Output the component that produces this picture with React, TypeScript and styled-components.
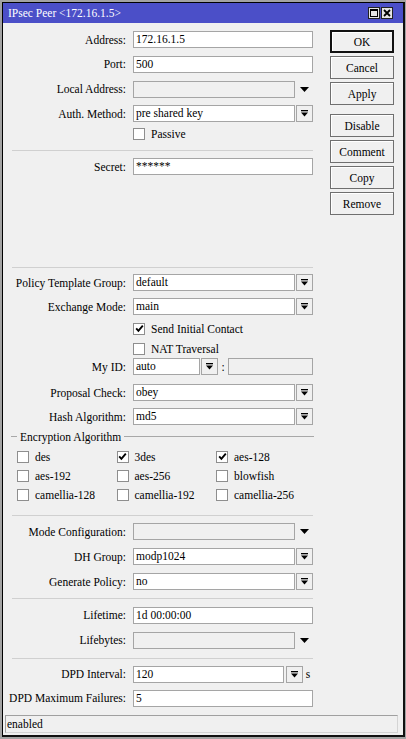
import { createGlobalStyle, styled } from "styled-components"

const GlobalStyle = createGlobalStyle`
  html, body {
    margin: 0;
    padding: 0;
    background: #a3a3a3;
  }
  body {
    font-family: "Liberation Serif", "Times New Roman", serif;
    font-size: 11.5px;
    color: #000;
  }
`

const Window = styled.div`
  margin: 2px 0 0 2px;
  width: 403px;
  height: 735px;
  box-sizing: border-box;
  border-left: 1px solid #000;
  border-top: 1px solid #000;
  border-right: 2px solid #111;
  border-bottom: 2px solid #111;
  background: #f0f0f0;
  display: flex;
  flex-direction: column;
`

const TitleBar = styled.div`
  height: 20px;
  background: #4b4fc8;
  color: #fff;
  display: flex;
  align-items: center;
  padding-left: 5px;
  padding-right: 10px;
`

const TitleText = styled.span`
  flex: 1;
  white-space: nowrap;
`

const TitleButtons = styled.div`
  display: flex;
  gap: 1px;
`

const TitleButton = styled.div`
  width: 12px;
  height: 12px;
  box-sizing: border-box;
  background: #e4e4e4;
  border: 1px solid #222;
  display: flex;
  align-items: center;
  justify-content: center;
`

const Main = styled.div`
  display: flex;
`

const Form = styled.div`
  width: 320px;
  display: flex;
  flex-direction: column;
`

const Row = styled.div<{ $mt: number }>`
  margin-top: ${p => p.$mt}px;
  display: grid;
  grid-template-columns: 123px 180px;
  column-gap: 7px;
  align-items: center;
  height: 17px;
`

const CheckRow = styled(Row)`
  height: 14px;
`

const Label = styled.label`
  text-align: right;
  white-space: nowrap;
`

const Field = styled.div`
  display: flex;
  align-items: center;
  height: 17px;
`

const TextBox = styled.div<{ $disabled?: boolean; $width?: number }>`
  ${p => (p.$width ? `width: ${p.$width}px;` : "flex: 1;")}
  height: 17px;
  box-sizing: border-box;
  border: 1px solid #a5a5a5;
  background: ${p => (p.$disabled ? "#f0f0f0" : "#fff")};
  padding-left: 2px;
  line-height: 15px;
  white-space: nowrap;
  overflow: hidden;
`

const DropButton = styled.div<{ $gap?: number }>`
  width: 17px;
  height: 17px;
  box-sizing: border-box;
  margin-left: ${p => p.$gap ?? 1}px;
  border: 1px solid #a5a5a5;
  background: #f0f0f0;
  display: flex;
  align-items: center;
  justify-content: center;
`

const ArrowSlot = styled.div`
  width: 17px;
  margin-left: 1px;
  display: flex;
  align-items: center;
  justify-content: center;
`

const Suffix = styled.span<{ $width: number }>`
  width: ${p => p.$width}px;
  text-align: center;
`

const Check = styled.div`
  display: flex;
  align-items: center;
  gap: 6px;
  white-space: nowrap;
`

const Box = styled.div`
  width: 12px;
  height: 12px;
  box-sizing: border-box;
  border: 1px solid #8e8e8e;
  background: #fff;
  display: flex;
  align-items: center;
  justify-content: center;
`

const Separator = styled.div<{ $mt: number }>`
  margin-top: ${p => p.$mt}px;
  margin-left: 9px;
  width: 301px;
  height: 1px;
  background: #d0d0d0;
`

const Legend = styled.div<{ $mt: number }>`
  margin-top: ${p => p.$mt}px;
  height: 14px;
  width: 303px;
  margin-left: 8px;
  display: flex;
  align-items: center;
`

const LegendLine = styled.div<{ $width?: number }>`
  height: 1px;
  background: #a8a8a8;
  ${p => (p.$width ? `width: ${p.$width}px;` : "flex: 1;")}
`

const LegendText = styled.span`
  margin: 0 3px;
  white-space: nowrap;
`

const AlgoGrid = styled.div<{ $mt: number }>`
  margin-top: ${p => p.$mt}px;
  padding-left: 14px;
  display: grid;
  grid-template-columns: 99.5px 99.5px 99.5px;
  height: 14px;
  align-items: center;
`

const ButtonColumn = styled.div`
  margin-left: 7px;
  padding-top: 7px;
  width: 64px;
  display: flex;
  flex-direction: column;
`

const Button = styled.div<{ $default?: boolean; $mt?: number }>`
  height: 23px;
  margin-top: ${p => p.$mt ?? 3}px;
  box-sizing: border-box;
  border: ${p => (p.$default ? "2px solid #111" : "1px solid #6f6f6f")};
  box-shadow: inset 1px 1px #fff;
  background: #f0f0f0;
  display: flex;
  align-items: center;
  justify-content: center;
`

const StatusBar = styled.div`
  margin: 8px 5px 0 2px;
  height: 18px;
  box-sizing: border-box;
  border-top: 1px solid #a0a0a0;
  border-left: 1px solid #a0a0a0;
  border-right: 1px solid #d4d4d4;
  border-bottom: 1px solid #d4d4d4;
  padding-left: 1px;
  line-height: 16px;
`

function DropIcon() {
  return (
    <svg width="7" height="7" viewBox="0 0 7 7">
      <rect x="0" y="0" width="7" height="1.3" fill="#000" />
      <path d="M0 2.6h7L3.5 6.6z" fill="#000" />
    </svg>
  )
}

function DownArrow() {
  return (
    <svg width="9" height="5" viewBox="0 0 9 5">
      <path d="M0 0h9L4.5 5z" fill="#000" />
    </svg>
  )
}

function CheckBox({ checked }: { checked?: boolean }) {
  return (
    <Box>
      {checked && (
        <svg width="9" height="9" viewBox="0 0 9 9">
          <path d="M1.2 4.4l2.2 2.4L7.8 1.6" stroke="#000" strokeWidth="1.9" fill="none" />
        </svg>
      )}
    </Box>
  )
}

function Select({ label, value, mt }: { label: string; value: string; mt: number }) {
  return (
    <Row $mt={mt}>
      <Label>{label}</Label>
      <Field>
        <TextBox>{value}</TextBox>
        <DropButton><DropIcon /></DropButton>
      </Field>
    </Row>
  )
}

function Optional({ label, mt }: { label: string; mt: number }) {
  return (
    <Row $mt={mt}>
      <Label>{label}</Label>
      <Field>
        <TextBox $disabled />
        <ArrowSlot><DownArrow /></ArrowSlot>
      </Field>
    </Row>
  )
}

function Text({ label, value, mt }: { label: string; value: string; mt: number }) {
  return (
    <Row $mt={mt}>
      <Label>{label}</Label>
      <Field>
        <TextBox>{value}</TextBox>
      </Field>
    </Row>
  )
}

function Flag({ text, checked, mt }: { text: string; checked?: boolean; mt: number }) {
  return (
    <CheckRow $mt={mt}>
      <span />
      <Check>
        <CheckBox checked={checked} />
        {text}
      </Check>
    </CheckRow>
  )
}

const algos = [
  [["des", false], ["3des", true], ["aes-128", true]],
  [["aes-192", false], ["aes-256", false], ["blowfish", false]],
  [["camellia-128", false], ["camellia-192", false], ["camellia-256", false]],
] as const

export default function App() {
  return (
    <>
      <GlobalStyle />
      <Window>
        <TitleBar>
          <TitleText>IPsec Peer &lt;172.16.1.5&gt;</TitleText>
          <TitleButtons>
            <TitleButton>
              <svg width="8" height="8" viewBox="0 0 8 8">
                <rect x="0.5" y="0.5" width="7" height="7" fill="none" stroke="#000" />
                <rect x="0" y="0" width="8" height="2" fill="#000" />
              </svg>
            </TitleButton>
            <TitleButton>
              <svg width="8" height="8" viewBox="0 0 8 8">
                <path d="M1 1l6 6M7 1L1 7" stroke="#000" strokeWidth="1.8" />
              </svg>
            </TitleButton>
          </TitleButtons>
        </TitleBar>

        <Main>
          <Form>
            <Text label="Address:" value="172.16.1.5" mt={8} />
            <Text label="Port:" value="500" mt={7.5} />
            <Optional label="Local Address:" mt={8} />
            <Select label="Auth. Method:" value="pre shared key" mt={7.8} />
            <Flag text="Passive" mt={4.7} />
            <Separator $mt={9} />
            <Text label="Secret:" value="******" mt={7.3} />
            <Separator $mt={91.4} />
            <Select label="Policy Template Group:" value="default" mt={6.6} />
            <Select label="Exchange Mode:" value="main" mt={7} />
            <Flag text="Send Initial Contact" checked mt={6.4} />
            <Flag text="NAT Traversal" mt={6} />
            <Row $mt={2.6}>
              <Label>My ID:</Label>
              <Field>
                <TextBox $width={67}>auto</TextBox>
                <DropButton><DropIcon /></DropButton>
                <Suffix $width={10}>:</Suffix>
                <TextBox $disabled />
              </Field>
            </Row>
            <Select label="Proposal Check:" value="obey" mt={9} />
            <Select label="Hash Algorithm:" value="md5" mt={7} />
            <Legend $mt={4.7}>
              <LegendLine $width={6} />
              <LegendText>Encryption Algorithm</LegendText>
              <LegendLine />
            </Legend>
            {algos.map((row, i) => (
              <AlgoGrid key={i} $mt={i === 0 ? 6 : 5}>
                {row.map(([name, on]) => (
                  <Check key={name}>
                    <CheckBox checked={on} />
                    {name}
                  </Check>
                ))}
              </AlgoGrid>
            ))}
            <Separator $mt={12.7} />
            <Optional label="Mode Configuration:" mt={7.6} />
            <Select label="DH Group:" value="modp1024" mt={8} />
            <Select label="Generate Policy:" value="no" mt={8} />
            <Separator $mt={8} />
            <Text label="Lifetime:" value="1d 00:00:00" mt={7.4} />
            <Optional label="Lifebytes:" mt={8} />
            <Separator $mt={9.6} />
            <Row $mt={6.4}>
              <Label>DPD Interval:</Label>
              <Field>
                <TextBox>120</TextBox>
                <DropButton $gap={2}><DropIcon /></DropButton>
                <Suffix $width={10}>s</Suffix>
              </Field>
            </Row>
            <Text label="DPD Maximum Failures:" value="5" mt={7.3} />
          </Form>

          <ButtonColumn>
            <Button $default $mt={0}>OK</Button>
            <Button>Cancel</Button>
            <Button>Apply</Button>
            <Button $mt={9}>Disable</Button>
            <Button>Comment</Button>
            <Button>Copy</Button>
            <Button>Remove</Button>
          </ButtonColumn>
        </Main>

        <StatusBar>enabled</StatusBar>
      </Window>
    </>
  )
}
